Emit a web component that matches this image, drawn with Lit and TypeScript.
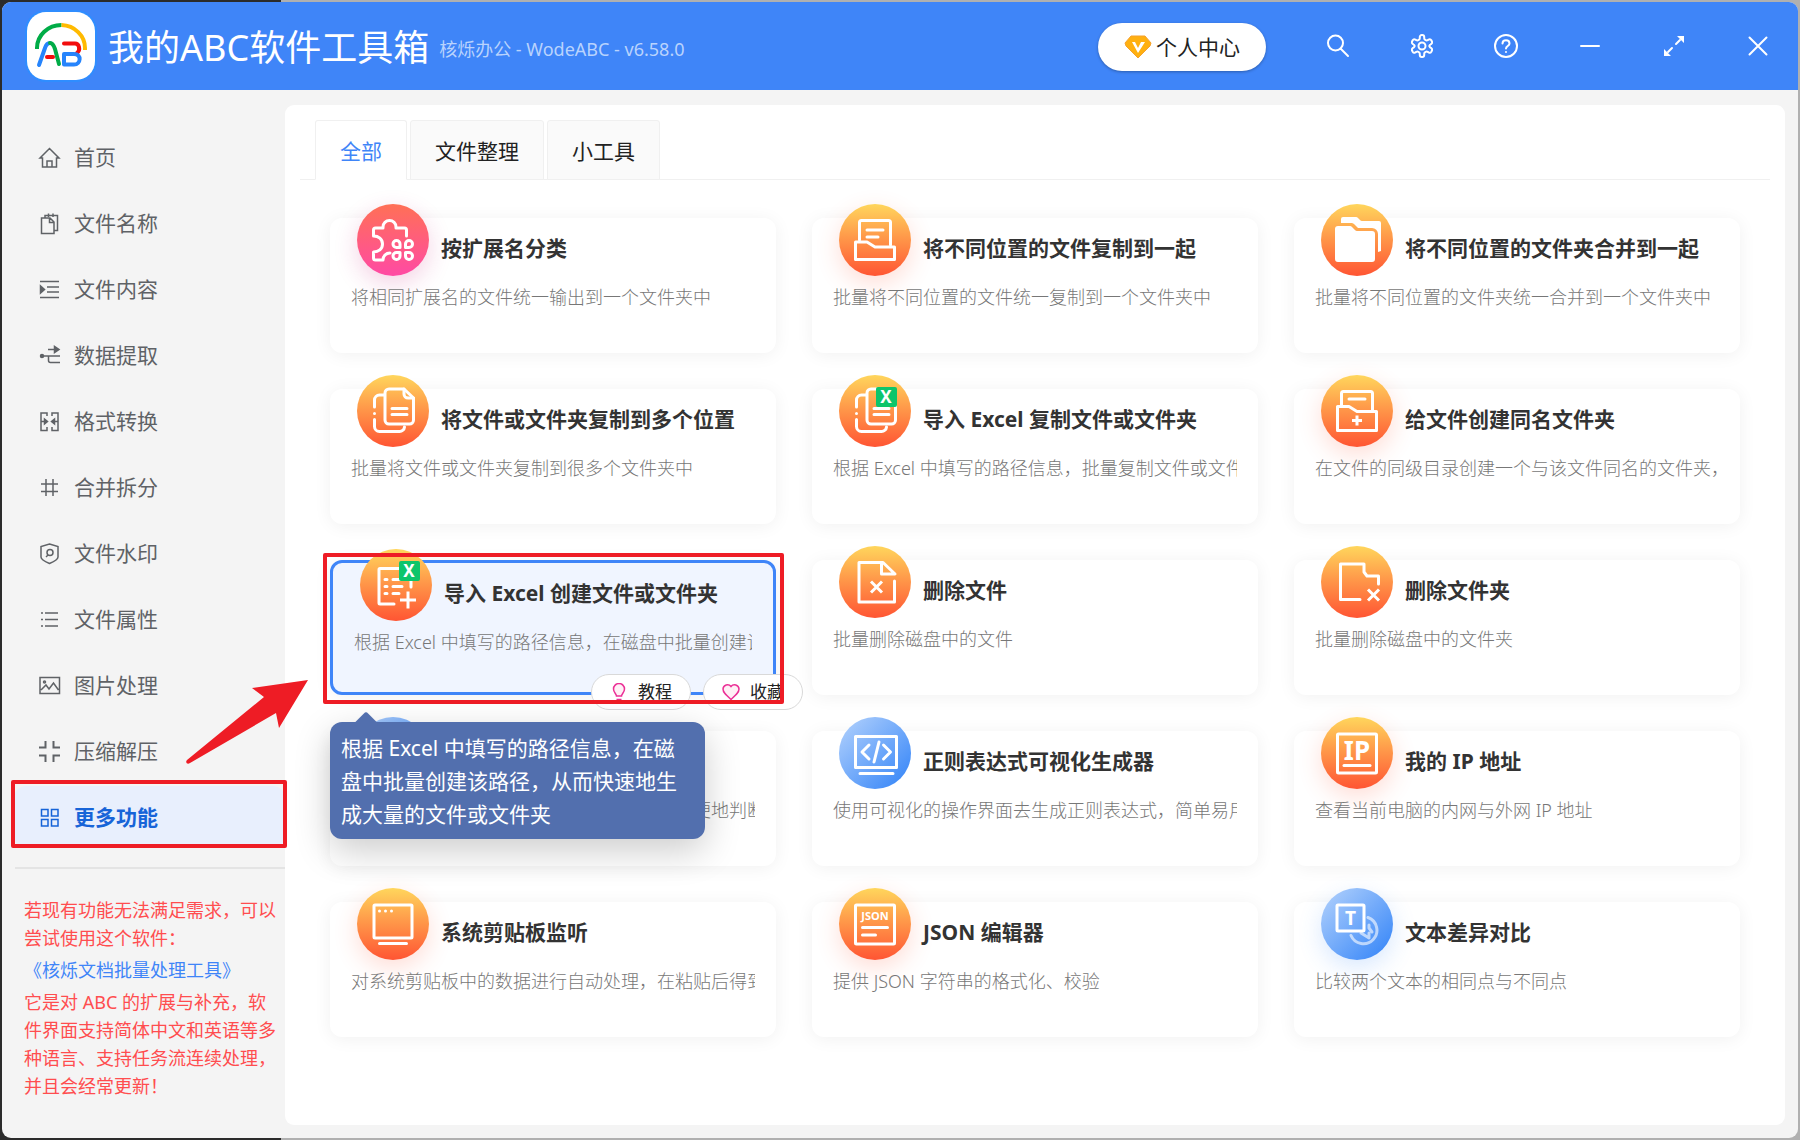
import { LitElement, html, svg, css, nothing } from "lit";
import { customElement, property, state } from "lit/decorators.js";
import { classMap } from "lit/directives/class-map.js";

type Tone = "pink" | "orange" | "blue";

interface Tool {
  title: string;
  text: string;
  tone: Tone;
  icon: string;
  glow?: boolean;
}

const COPY = svg`
  <path d="M47 14H32a4 4 0 0 0-4 4v27a4 4 0 0 0 4 4h20.500a4 4 0 0 0 4-4V23z" />
  <path d="M47 14v5a4 4 0 0 0 4 4h5.500" />
  <path d="M35 33.500h15M35 39.500h15M27 20h-4.500a5 5 0 0 0-5 5v7M17.500 38.500v.1M17.500 44.500v7a5 5 0 0 0 5 5h20a5 5 0 0 0 5-4.500" />`;

const excelBadge = (x: number) => svg`
  <rect class="badge" x=${x} y="12" width="21" height="20" rx="2" />
  <text class="glyph" x=${x + 10} y="28" font-size="17" text-anchor="middle">X</text>`;

const TOOL_ICONS: Record<string, unknown> = {
  classify: svg`
    <path d="M49.500 32v-6a2 2 0 0 0-2-2H39v-1a6.500 6.500 0 0 0-13 0v1h-7.500a2 2 0 0 0-2 2v6c5 0 9 3 9 8s-4 8-9 8v6a2 2 0 0 0 2 2H26c0-4 3-7 7-7" />
    <path d="M43 43.500h-3.500a3.500 3.500 0 1 1 3.500-3.500z" />
    <path d="M48.500 43.500H52a3.500 3.500 0 1 0-3.500-3.500z" />
    <path d="M43 48.500h-3.500a3.500 3.500 0 1 0 3.500 3.500z" />
    <path d="M48.500 48.500H52a3.500 3.500 0 1 1-3.500 3.500z" />`,
  gather: svg`
    <path d="M20.500 36V18.500a2 2 0 0 1 2-2h27a2 2 0 0 1 2 2V41" />
    <path d="M28 26h16M28 33h11" />
    <path d="M16.500 38H28l8 5h19.500v12.500h-39z" />`,
  merge: svg`
    <path class="solid" d="M14 25a3 3 0 0 1 3-3h12a3 3 0 0 1 2 1l3 3a3 3 0 0 0 2 1h15a3 3 0 0 1 3 3v25a3 3 0 0 1-3 3H17a3 3 0 0 1-3-3z" />
    <path class="solid" d="M20 15a2 2 0 0 1 2-2h13a3 3 0 0 1 2 1l2 2a3 3 0 0 0 2 1h17a2 2 0 0 1 2 2v28l-3 1V30a6 6 0 0 0-6-6H37l-4-4a4 4 0 0 0-3-1H20z" />`,
  copy: COPY,
  copyExcel: svg`${COPY}${excelBadge(37)}`,
  sameName: svg`
    <path d="M20.500 30V18.500a2 2 0 0 1 2-2h27a2 2 0 0 1 2 2V35" />
    <path d="M28 24h16" />
    <path d="M16.500 31.500H28l8 5h19.500v19h-39z" />
    <path class="cross" d="M36 40.500v10M31 45.500h10" />`,
  createExcel: svg`
    <path d="M51 38V21.500a2 2 0 0 0-2-2H20a1 1 0 0 0-1 1V54a1 1 0 0 0 1 1h14" />
    <path d="M25 30.500h2M25 37.500h2M25 44.500h2M33 30.500h8M33 37.500h9M33 44.500h6" />
    <path class="cross" d="M48 42.500v17M40 51h16" />
    ${excelBadge(39)}`,
  deleteFile: svg`
    <path d="M55.500 35v21H20V16.500h24L56 28H42.500V17" />
    <path class="cross" d="M32 35.500l11 11M43 35.500l-11 11" />`,
  deleteFolder: svg`
    <path d="M57.500 38v-8H46l-3-4v-8H19.500v35.500H39" />
    <path class="cross" d="M47 43.500l11 11M58 43.500l-11 11" />`,
  regex: svg`
    <path d="M16.500 19.500h41v31h-41zM21 56.500h33" />
    <path d="M30 28l-7 7 7 7M44.500 28l7 7-7 7M40 25l-5 20" />`,
  ip: svg`
    <rect x="16.500" y="17" width="39" height="39" rx="1" />
    <text class="glyph" x="36" y="43" font-size="26" text-anchor="middle">IP</text>
    <path d="M23 48.500h26" />`,
  clipboard: svg`
    <rect x="17" y="17" width="38" height="33" rx="1" />
    <path d="M22.500 23v.1M28.500 23v.1M34.500 23v.1M22.500 55.500h27" />`,
  json: svg`
    <rect x="16.500" y="17" width="39" height="39" rx="1" />
    <text class="glyph" x="36" y="32" font-size="11" text-anchor="middle">JSON</text>
    <path d="M23.500 39.500h25M23.500 47h13" />`,
  diff: svg`
    <rect x="16" y="17" width="27" height="26" rx="1" />
    <text class="glyph" x="29.500" y="37" font-size="19" text-anchor="middle">T</text>
    <g class="faded">
      <path d="M47 29.500a13.500 13.500 0 1 1-17 18" />
      <path d="M40 45l8 5v-5M51 44l-3-4v-3" />
    </g>`,
};

const NAV_ICONS: Record<string, unknown> = {
  home: svg`<path d="M1 11l9.500-9.500L20 11h-2.500v9h-14v-9zM8 20v-6h5v6" />`,
  name: svg`<path d="M2.500 5h8.500l4 4v11.500H2.500zM10.500 5v4.500H15M6 5V2.500h12.500v15H15M9.500.5V4M14 .5V4" />`,
  content: svg`<path d="M1 2.500h19M8 8h12M8 13h12M1 18.500h19" /><path class="fill" d="M1.500 7v7l4-3.500z" />`,
  extract: svg`<path d="M3 11h18M9.500 11v4.500a2 2 0 0 0 2 2H21M9 4.500h8" /><circle class="fill" cx="3" cy="11" r="1.500" /><path class="fill" d="M15.500 1.500v6l4.500-3z" />`,
  convert: svg`<path d="M8 5V2H2v17.500h6V16M13 5V2h6v17.500h-6V16M2 10.500h4M19 10.500h-4" /><path class="fill" d="M5.500 8v5l3-2.500zM15.500 8v5l-3-2.500z" />`,
  split: svg`<path d="M7 2v17M14 2v17M2 7h17M2 14.500h17" />`,
  watermark: svg`<path d="M10.500 1l8.500 2.500V14c0 2-5 5-8.500 6.500C7 19 2 16 2 14V3.500z" /><circle cx="11" cy="9.500" r="3" /><path d="M9 12l-2 2" />`,
  attrs: svg`<path d="M6 4h13M6 10.500h13M6 17h13M2 4h2M2 10.500h2M2 17h2" />`,
  image: svg`<path d="M1 2.500h19.500v16H1zM2 15l5-5 3 4 4.500-6 5 7" /><circle cx="5.500" cy="7" r="1" />`,
  zip: svg`<path class="bold" d="M0 6.500h6.500V0M14.500 0v6.500H21M0 14.500h6.500V21M14.500 21v-6.500H21" />`,
  more: svg`<path d="M2.500 2.500h6.500v6.500H2.500zM12.500 2.500H19v6.500h-6.500zM2.500 12.500h6.500V19H2.500zM12.500 12.500H19V19h-6.500z" />`,
};

const NAV: [string, string][] = [
  ["home", "首页"],
  ["name", "文件名称"],
  ["content", "文件内容"],
  ["extract", "数据提取"],
  ["convert", "格式转换"],
  ["split", "合并拆分"],
  ["watermark", "文件水印"],
  ["attrs", "文件属性"],
  ["image", "图片处理"],
  ["zip", "压缩解压"],
  ["more", "更多功能"],
];

const TOOLS: Tool[] = [
  { title: "按扩展名分类", text: "将相同扩展名的文件统一输出到一个文件夹中", tone: "pink", icon: "classify", glow: true },
  { title: "将不同位置的文件复制到一起", text: "批量将不同位置的文件统一复制到一个文件夹中", tone: "orange", icon: "gather", glow: true },
  { title: "将不同位置的文件夹合并到一起", text: "批量将不同位置的文件夹统一合并到一个文件夹中", tone: "orange", icon: "merge" },
  { title: "将文件或文件夹复制到多个位置", text: "批量将文件或文件夹复制到很多个文件夹中", tone: "orange", icon: "copy" },
  { title: "导入 Excel 复制文件或文件夹", text: "根据 Excel 中填写的路径信息，批量复制文件或文件夹", tone: "orange", icon: "copyExcel" },
  { title: "给文件创建同名文件夹", text: "在文件的同级目录创建一个与该文件同名的文件夹，", tone: "orange", icon: "sameName", glow: true },
  { title: "导入 Excel 创建文件或文件夹", text: "根据 Excel 中填写的路径信息，在磁盘中批量创建该路径，从而快速地生成大量的文件或文件夹", tone: "orange", icon: "createExcel" },
  { title: "删除文件", text: "批量删除磁盘中的文件", tone: "orange", icon: "deleteFile" },
  { title: "删除文件夹", text: "批量删除磁盘中的文件夹", tone: "orange", icon: "deleteFolder" },
  { title: "正则表达式测试", text: "用于测试正则表达式的匹配结果，能够更方便地判断表达式", tone: "blue", icon: "regex" },
  { title: "正则表达式可视化生成器", text: "使用可视化的操作界面去生成正则表达式，简单易用", tone: "blue", icon: "regex" },
  { title: "我的 IP 地址", text: "查看当前电脑的内网与外网 IP 地址", tone: "orange", icon: "ip", glow: true },
  { title: "系统剪贴板监听", text: "对系统剪贴板中的数据进行自动处理，在粘贴后得到", tone: "orange", icon: "clipboard", glow: true },
  { title: "JSON 编辑器", text: "提供 JSON 字符串的格式化、校验", tone: "orange", icon: "json", glow: true },
  { title: "文本差异对比", text: "比较两个文本的相同点与不同点", tone: "blue", icon: "diff", glow: true },
];

const base = css`
  * {
    box-sizing: border-box;
  }
  button {
    font: inherit;
    color: inherit;
    border: 0;
    padding: 0;
    background: none;
    cursor: pointer;
  }
`;

@customElement("title-bar")
class TitleBar extends LitElement {
  static styles = [
    base,
    css`
      :host {
        display: flex;
        align-items: center;
        height: 88px;
        padding: 0 28px 0 25px;
        background: #3f85f8;
        color: #fff;
      }
      .logo {
        width: 68px;
        height: 68px;
        border-radius: 19px;
        background: #fff;
        box-shadow: 0 0 0 2px #2f8dff;
        fill: none;
        stroke-width: 4;
        stroke-linecap: round;
        stroke-linejoin: round;
      }
      .name {
        margin: 0 0 0 13px;
        padding-top: 4px;
        font-size: 36px;
        line-height: 48px;
        font-weight: 400;
      }
      .version {
        margin-left: 10px;
        padding-top: 6px;
        font-size: 18px;
        line-height: 24px;
        color: #b9d3fd;
      }
      .tools {
        display: flex;
        align-items: center;
        gap: 60px;
        margin-left: auto;
      }
      .account {
        display: flex;
        align-items: center;
        gap: 4px;
        height: 48px;
        margin-top: 2px;
        padding: 0 26px;
        border-radius: 24px;
        background: #fff;
        color: #222;
        font-size: 21px;
        line-height: 24px;
        box-shadow: 0 1px 3px rgba(0, 0, 0, 0.3);
      }
      .tool {
        width: 24px;
        height: 24px;
      }
      .tool svg {
        display: block;
        width: 24px;
        height: 24px;
        fill: none;
        stroke: #fff;
        stroke-width: 2;
        stroke-linecap: round;
        stroke-linejoin: round;
      }
      .tool .fill {
        fill: #fff;
        stroke: none;
      }
      .g { stroke: #00ac47; }
      .y { stroke: #ffba00; }
      .b { stroke: #2684fc; }
      .r { stroke: #f20d0d; }
    `,
  ];

  render() {
    const tool = (label: string, shape: unknown) =>
      html`<button class="tool" aria-label=${label}><svg viewBox="0 0 24 24">${shape}</svg></button>`;
    return html`
      <svg class="logo" viewBox="0 0 68 68" aria-hidden="true">
        <g stroke-linecap="butt">
          <path class="g" d="M10 37V36A24.500 23 0 0 1 34.500 13" />
          <path class="y" d="M34.500 13A24.500 23 0 0 1 58 36v2" />
        </g>
        <path class="b" d="M12 53l6-17c1-3 2-5 5-5" />
        <path class="g" d="M23 31c3 0 4 3 5 6l4 15" />
        <path class="r" d="M20 45h6" />
        <path class="r" d="M37 31.500h11c4 0 6 6 2 9.500" />
        <path class="b" d="M37 42h10c8 0 7 10.500 0 10.500H37z" />
      </svg>
      <h1 class="name">我的ABC软件工具箱</h1>
      <span class="version">核烁办公 - WodeABC - v6.58.0</span>
      <div class="tools">
        <button class="account">
          <svg width="28" height="24" viewBox="0 0 28 24" aria-hidden="true">
            <path d="M7 1h14l6 7-1 3-12 12L2 11 1 8z" fill="#ffb010" stroke="#f5a12c" stroke-width="1" />
            <path d="M8 7h3l3 6 3-6h4l-7 11z" fill="#fff" />
          </svg>
          个人中心
        </button>
        ${tool("搜索", svg`<circle cx="9.500" cy="9" r="7.500" /><path d="M14.500 14.500l7.500 7.500" />`)}
        ${tool("设置", svg`<path d="M12.220 1h-.44a2 2 0 0 0-2 2v1.180a2 2 0 0 1-1 1.730l-.43.25a2 2 0 0 1-2 0l-.95-.58a2 2 0 0 0-2.730.73l-.72 1.380a2 2 0 0 0 .73 2.230l.95.6a2 2 0 0 1 1 1.220v.51a2 2 0 0 1-1 1.240l-.95.590a2 2 0 0 0-.73 2.230l.72 1.380a2 2 0 0 0 2.730.73l.95-.58a2 2 0 0 1 2 0l.43.25a2 2 0 0 1 1 1.730V21a2 2 0 0 0 2 2h.44a2 2 0 0 0 2-2v-1.180a2 2 0 0 1 1-1.730l.43-.25a2 2 0 0 1 2 0l.95.58a2 2 0 0 0 2.730-.73l.72-1.380a2 2 0 0 0-.73-2.230l-.95-.59a2 2 0 0 1-1-1.240v-.5a2 2 0 0 1 1-1.230l.95-.6a2 2 0 0 0 .73-2.230l-.72-1.380a2 2 0 0 0-2.730-.73l-.95.58a2 2 0 0 1-2 0l-.43-.25a2 2 0 0 1-1-1.730V3a2 2 0 0 0-2-2z" /><circle cx="12" cy="12" r="3.500" />`)}
        ${tool("帮助", svg`<circle cx="12" cy="12" r="11" /><path d="M8.500 9.500C8.500 5 15.500 5 15.500 9.500c0 2.500-3.500 2.500-3.500 5M12 18v.1" />`)}
        ${tool("最小化", svg`<path d="M3 12h18" />`)}
        ${tool("还原", svg`<path d="M18 6l-4 4M10 14l-4 4" /><path class="fill" d="M22 2v7l-7-7zM2 22v-7l7 7z" />`)}
        ${tool("关闭", svg`<path d="M3.500 3.500l17 17M20.500 3.500l-17 17" />`)}
      </div>
    `;
  }
}

@customElement("side-nav")
class SideNav extends LitElement {
  @state() active = "more";

  static styles = [
    base,
    css`
      :host {
        display: block;
        position: relative;
        z-index: 2;
        width: 283px;
        flex: none;
        padding-top: 36px;
      }
      .list {
        position: relative;
        display: flex;
        flex-direction: column;
        gap: 4px;
        padding-left: 12px;
      }
      .item {
        position: relative;
        display: flex;
        align-items: center;
        gap: 14px;
        height: 62px;
        padding-left: 25px;
        border-radius: 12px;
        color: #5f6266;
        font-size: 21px;
        line-height: 30px;
        text-decoration: none;
      }
      .item svg {
        width: 21px;
        height: 21px;
        overflow: visible;
        fill: none;
        stroke: currentColor;
        stroke-width: 1.5;
      }
      .item .fill {
        fill: currentColor;
      }
      .item .bold {
        stroke-width: 2;
      }
      .current {
        background: #e8effd;
        color: #1764d8;
        font-weight: 700;
      }
      .mark {
        position: absolute;
        inset: -6px -2px 0 -3px;
        border: 4px solid #ee1c25;
        border-radius: 2px;
        pointer-events: none;
      }
      .pointer {
        position: absolute;
        right: -25px;
        bottom: 82px;
        width: 124px;
        height: 88px;
        fill: #ee1c25;
        pointer-events: none;
      }
      .note {
        margin-top: 19px;
        margin-left: 13px;
        padding: 27px 0 0 9px;
        border-top: 2px solid #e4e4e4;
        color: #ff4d4f;
        font-size: 18px;
        line-height: 28px;
      }
      .note p {
        margin: 0;
        max-width: 256px;
      }
      .note a {
        display: block;
        line-height: 36px;
        color: #3f85f8;
        text-decoration: none;
      }
    `,
  ];

  render() {
    return html`
      <nav class="list">
        ${NAV.map(([id, label]) => {
          const current = id === this.active;
          return html`<a
            href="#${id}"
            class=${classMap({ item: true, current })}
            aria-current=${current ? "page" : nothing}
            @click=${() => (this.active = id)}
          >
            <svg viewBox="0 0 21 21" aria-hidden="true">${NAV_ICONS[id]}</svg>
            <span>${label}</span>
            ${id === "more" ? html`<span class="mark"></span>` : nothing}
          </a>`;
        })}
        <svg class="pointer" viewBox="0 0 124 88" aria-hidden="true">
          <path d="M122 2L66 10l12 9L1 82c-2 2 0 5 3 3l86-50 3 15z" />
        </svg>
      </nav>
      <div class="note">
        <p>若现有功能无法满足需求，可以尝试使用这个软件：</p>
        <a href="#docs">《核烁文档批量处理工具》</a>
        <p>它是对 ABC 的扩展与补充，软件界面支持简体中文和英语等多种语言、支持任务流连续处理，并且会经常更新！</p>
      </div>
    `;
  }
}

@customElement("tool-card")
class ToolCard extends LitElement {
  @property({ attribute: false }) tool!: Tool;
  @property({ type: Boolean, reflect: true }) active = false;

  static styles = [
    base,
    css`
      :host {
        display: block;
        position: relative;
        min-width: 0;
        height: 135px;
        padding: 0 21px;
        border-radius: 12px;
        background: #fff;
        box-shadow: 0 2px 18px rgba(0, 0, 0, 0.06);
      }
      :host([active]) {
        z-index: 3;
        border: 3px solid #3f85f8;
        background: #f0f5ff;
      }
      .head {
        display: flex;
        align-items: center;
        gap: 12px;
        margin-top: -14px;
        padding-left: 6px;
      }
      .icon {
        flex: none;
        width: 72px;
        height: 72px;
        border-radius: 50%;
      }
      .icon svg {
        display: block;
        width: 72px;
        height: 72px;
        fill: none;
        stroke: #fff;
        stroke-width: 3;
        stroke-linecap: round;
        stroke-linejoin: round;
      }
      .icon .solid {
        fill: #fff;
        stroke: none;
      }
      .icon .cross {
        stroke-linecap: butt;
      }
      .icon .faded {
        opacity: 0.6;
      }
      .icon .badge {
        fill: #0dc56b;
        stroke: none;
      }
      .icon .glyph {
        fill: #fff;
        stroke: none;
        font-weight: 700;
      }
      .pink { background: linear-gradient(#ff7056, #ff4aa4); }
      .orange { background: linear-gradient(#ffd65c, #ff9a4a 45%, #ff5533); }
      .blue { background: linear-gradient(135deg, #a8cbfc 10%, #3d8af8 90%); }
      .pink.glow { box-shadow: 0 8px 24px rgba(200, 30, 120, 0.2); }
      .orange.glow { box-shadow: 0 8px 24px rgba(255, 85, 51, 0.2); }
      .blue.glow { box-shadow: 0 8px 24px rgba(61, 138, 248, 0.2); }
      .title {
        margin: 0;
        padding-top: 16px;
        color: #333;
        font-size: 21px;
        line-height: 30px;
        font-weight: 700;
        white-space: nowrap;
      }
      .text {
        margin: 7px 0 0;
        overflow: hidden;
        color: #777;
        font-size: 18px;
        font-weight: 300;
        line-height: 28px;
        white-space: nowrap;
      }
      .actions {
        position: absolute;
        right: -30px;
        bottom: -18px;
        display: flex;
        gap: 12px;
      }
      .action {
        display: flex;
        align-items: center;
        gap: 10px;
        height: 36px;
        padding: 0 18px;
        border: 1px solid #d9d9d9;
        border-radius: 18px;
        background: #fff;
        color: #222;
        font-size: 17px;
        line-height: 24px;
        white-space: nowrap;
      }
      .action svg {
        width: 18px;
        height: 18px;
        fill: #fff0f6;
        stroke: #eb2f96;
        stroke-width: 1.5;
      }
      .mark {
        position: absolute;
        inset: -10px -11px -12px -10px;
        border: 4px solid #ee1c25;
        border-radius: 2px;
        pointer-events: none;
      }
      .tip {
        position: absolute;
        top: 159px;
        left: -3px;
        width: 375px;
        padding: 10px 11px 8px;
        border-radius: 12px;
        background: #526fae;
        color: #fff;
        font-size: 21px;
        line-height: 33px;
        box-shadow: 0 12px 36px rgba(0, 0, 0, 0.2);
      }
      .tip::before {
        content: "";
        position: absolute;
        top: -7px;
        left: 27px;
        width: 18px;
        height: 18px;
        border-radius: 3px;
        background: #526fae;
        transform: rotate(45deg);
      }
    `,
  ];

  render() {
    const t = this.tool;
    return html`
      <div class="head">
        <span class=${classMap({ icon: true, [t.tone]: true, glow: !!t.glow })}>
          <svg viewBox="0 0 72 72" aria-hidden="true">${TOOL_ICONS[t.icon]}</svg>
        </span>
        <h2 class="title">${t.title}</h2>
      </div>
      <p class="text">${t.text}</p>
      ${this.active
        ? html`<div class="actions">
              <button class="action">
                <svg viewBox="0 0 18 18" aria-hidden="true"><path d="M6.500 13c0-2-3-3.500-3-7a5.500 5.500 0 0 1 11 0c0 3.500-3 5-3 7zM6.500 16.500h5" /></svg>
                教程
              </button>
              <button class="action">
                <svg viewBox="0 0 18 18" aria-hidden="true"><path d="M9 16.500C4 12 1 9.500 1 6a4.500 4.500 0 0 1 8-2.500A4.500 4.500 0 0 1 17 6c0 3.500-3 6-8 10.500z" /></svg>
                收藏
              </button>
            </div>
            <span class="mark"></span>
            <div class="tip" role="tooltip">${t.text}</div>`
        : nothing}
    `;
  }
}

@customElement("app-root")
class AppRoot extends LitElement {
  @state() tab = 0;

  static styles = [
    base,
    css`
      :host {
        display: block;
        font-family: "Noto Sans", "Noto Sans CJK SC", sans-serif;
        font-weight: 400;
      }
      .desktop {
        display: flex;
        min-height: 100vh;
        padding: 2px;
        background: linear-gradient(90deg, #2b2b2b 281px, #b0b0b0 281px);
      }
      .window {
        display: flex;
        flex: 1;
        flex-direction: column;
        min-width: 0;
        overflow: hidden;
        border-radius: 9px;
        background: #f4f4f4;
      }
      .body {
        display: flex;
        flex: 1;
      }
      .panel {
        flex: 1;
        min-width: 0;
        margin: 15px 13px 13px 0;
        padding: 15px;
        border-radius: 9px;
        background: #fff;
      }
      .tabs {
        display: flex;
        gap: 3px;
        padding-left: 15px;
        border-bottom: 1px solid #f0f0f0;
      }
      .tab {
        height: 60px;
        margin-bottom: -1px;
        padding: 2px 24px 0;
        border: 1px solid #f0f0f0;
        border-radius: 3px 3px 0 0;
        background: #fafafa;
        color: #222;
        font-size: 21px;
        line-height: 30px;
      }
      .selected {
        border-bottom-color: #fff;
        background: #fff;
        color: #3f85f8;
      }
      .grid {
        display: grid;
        grid-template-columns: repeat(3, minmax(0, 1fr));
        gap: 36px;
        padding: 38px 30px 73px;
      }
    `,
  ];

  render() {
    return html`
      <div class="desktop" lang="zh-CN">
        <div class="window">
          <title-bar></title-bar>
          <div class="body">
            <side-nav></side-nav>
            <main class="panel">
              <div class="tabs" role="tablist">
                ${["全部", "文件整理", "小工具"].map(
                  (label, i) => html`<button
                    role="tab"
                    class=${classMap({ tab: true, selected: i === this.tab })}
                    aria-selected=${i === this.tab ? "true" : "false"}
                    @click=${() => (this.tab = i)}
                  >${label}</button>`
                )}
              </div>
              <div class="grid">
                ${TOOLS.map((t) => html`<tool-card .tool=${t} ?active=${t.icon === "createExcel"}></tool-card>`)}
              </div>
            </main>
          </div>
        </div>
      </div>
    `;
  }
}
